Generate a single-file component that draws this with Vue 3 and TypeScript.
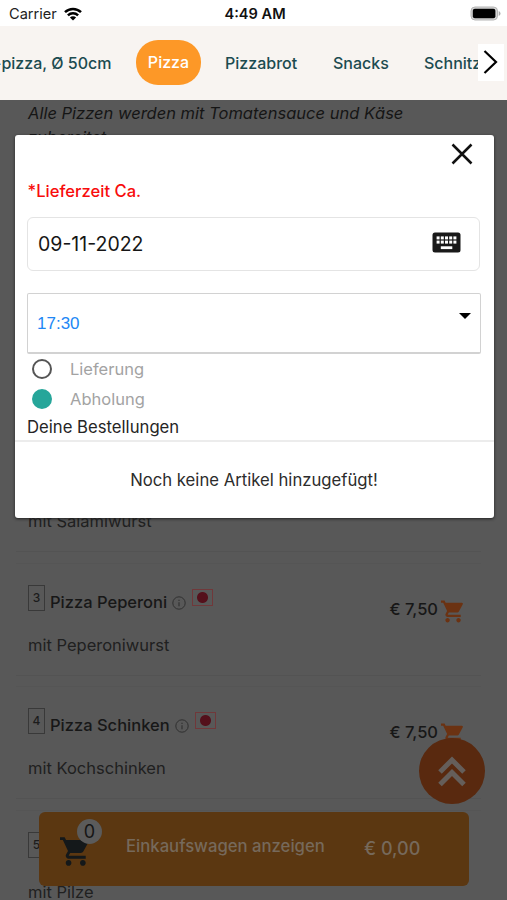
<script setup lang="ts">
interface Dish {
  no: number
  name: string
  text: string
  price: string
}

const categories: string[] = ['Pizzabrot', 'Snacks', 'Schnitzel']

const dishes: Dish[] = [
  { no: 2, name: 'Pizza Salami', text: 'mit Salamiwurst', price: '€ 7,50' },
  { no: 3, name: 'Pizza Peperoni', text: 'mit Peperoniwurst', price: '€ 7,50' },
  { no: 4, name: 'Pizza Schinken', text: 'mit Kochschinken', price: '€ 7,50' },
  { no: 5, name: 'Pizza Pilze', text: 'mit Pilze', price: '€ 7,50' },
]

const cartPath =
  'M7 18c-1.1 0-1.99.9-1.99 2S5.9 22 7 22s2-.9 2-2-.9-2-2-2zM1 2v2h2l3.6 7.59-1.35 2.45c-.16.28-.25.61-.25.96 0 1.1.9 2 2 2h12v-2H7.42c-.14 0-.25-.11-.25-.25l.03-.12.9-1.63h7.45c.75 0 1.41-.41 1.75-1.03l3.58-6.49A1.003 1.003 0 0 0 20 4H5.21l-.94-2H1zm16 16c-1.1 0-1.99.9-1.99 2s.89 2 1.99 2 2-.9 2-2-.9-2-2-2z'
</script>

<template>
  <main class="screen">
    <header class="status">
      <div class="carrier">
        <span>Carrier</span>
        <svg class="wifi" viewBox="0 0 18 14">
          <g fill="none" stroke="#000" stroke-width="2.5">
            <path d="M1 5.2A11.6 11.6 0 0 1 17 5.2" />
            <path d="M3.9 8.3A7.4 7.4 0 0 1 14.1 8.3" />
          </g>
          <path d="M9 13.6L5.9 10.5A4.4 4.4 0 0 1 12.1 10.5Z" />
        </svg>
      </div>
      <span class="clock">4:49 AM</span>
      <svg class="battery" viewBox="0 0 31 15">
        <rect x="1" y="1" width="26.5" height="13" rx="4" fill="#d4d4d4" stroke="#b5b5b5" />
        <rect x="2.8" y="2.8" width="22.6" height="9.4" rx="2" />
        <path d="M28.7 5v5q1.8-.7 1.8-2.5T28.7 5z" fill="#aaa" />
      </svg>
    </header>

    <nav class="tabs">
      <span class="tab first">-pizza, Ø 50cm</span>
      <span class="tab active">Pizza</span>
      <span v-for="(c, i) in categories" :key="c" class="tab" :class="'cat-' + i">{{ c }}</span>
      <button class="next" aria-label="Weiter">
        <svg viewBox="0 0 26 37">
          <path d="M6.5 7L18 18L6.5 29" fill="none" stroke="#000" stroke-width="2.2" />
        </svg>
      </button>
    </nav>

    <section class="menu">
      <p class="intro">Alle Pizzen werden mit Tomatensauce und Käse<br />zubereitet.</p>
      <article v-for="d in dishes" :key="d.no" class="dish">
        <div class="head">
          <span class="no">{{ d.no }}</span>
          <span class="name">{{ d.name }}</span>
          <svg class="info" viewBox="0 0 14 14">
            <circle cx="7" cy="7" r="6.2" fill="none" stroke="#303030" stroke-width="1" />
            <path d="M7 6.2v4M7 3.8v1.2" stroke="#303030" stroke-width="1.1" />
          </svg>
          <span class="flag"></span>
          <span class="price">{{ d.price }}</span>
          <svg class="cart" viewBox="1 2 21 20"><path :d="cartPath" fill="#6b3212" /></svg>
        </div>
        <p class="text">{{ d.text }}</p>
      </article>
    </section>

    <div class="basket">
      <div class="basket-icon">
        <svg viewBox="1 2 21 20"><path :d="cartPath" fill="#14181a" /></svg>
        <span class="count">0</span>
      </div>
      <span class="show">Einkaufswagen anzeigen</span>
      <span class="sum">€ 0,00</span>
    </div>

    <button class="top" aria-label="Nach oben">
      <svg viewBox="0 0 66 66">
        <g fill="none" stroke="#655e5a" stroke-width="5">
          <path d="M21 34L33 22L45 34" />
          <path d="M21 46.5L33 34.5L45 46.5" />
        </g>
      </svg>
    </button>

    <section class="modal">
      <button class="close" aria-label="Schließen">
        <svg viewBox="0 0 22 22">
          <path d="M1.5 1.5L20.5 20.5M20.5 1.5L1.5 20.5" stroke="#111" stroke-width="2.5" />
        </svg>
      </button>
      <p class="label">*Lieferzeit Ca.</p>
      <div class="date">
        <span>09-11-2022</span>
        <svg viewBox="0 0 29 21">
          <rect x=".5" y=".5" width="28" height="20" rx="2.5" fill="#191919" />
          <g fill="#fff">
            <template v-for="r in 2" :key="r">
              <rect v-for="c in 5" :key="c" :x="c * 4.2 + 0.4" :y="r * 4.2 + 0.2" width="3" height="3" />
            </template>
            <rect x="8.8" y="14.3" width="11.5" height="2.8" />
          </g>
        </svg>
      </div>
      <div class="time">
        <span>17:30</span>
        <i class="caret"></i>
      </div>
      <div class="radio"><i class="dot"></i><span>Lieferung</span></div>
      <div class="radio"><i class="dot on"></i><span>Abholung</span></div>
      <h2 class="orders">Deine Bestellungen</h2>
      <p class="empty">Noch keine Artikel hinzugefügt!</p>
    </section>
  </main>
</template>

<style>
body {
  margin: 0;
  overflow: hidden;
}
</style>

<style scoped>
* {
  box-sizing: border-box;
}
p,
h2 {
  margin: 0;
}
button {
  border: 0;
  padding: 0;
}
svg {
  display: block;
  flex: none;
}
.screen {
  position: relative;
  width: 507px;
  height: 900px;
  overflow: hidden;
  background: #585858;
  font-family: Inter, 'Liberation Sans', sans-serif;
  font-size: 16.5px;
  white-space: nowrap;
}
.status {
  display: grid;
  grid-template-columns: 1fr auto 1fr;
  align-items: center;
  height: 26px;
  padding: 1px 6px 0 9px;
  background: #fff;
  font-size: 14.6px;
}
.carrier {
  display: flex;
  align-items: center;
  gap: 7px;
  color: #222;
}
.wifi {
  width: 18px;
  height: 14px;
}
.clock {
  font-weight: 600;
  color: #111;
}
.battery {
  width: 31px;
  height: 15px;
  justify-self: end;
}
.tabs {
  position: relative;
  display: flex;
  align-items: center;
  height: 74px;
  padding-bottom: 1px;
  overflow: hidden;
  background: #f8f4f1;
  color: #1c4b50;
  font-size: 16px;
  font-weight: 500;
}
.tab {
  flex: none;
}
.first {
  width: 136px;
  text-indent: -6px;
}
.active {
  width: 65px;
  height: 45px;
  margin-right: 24px;
  border-radius: 22px;
  background: #fd9827;
  color: #fff;
  line-height: 45px;
  text-align: center;
}
.cat-0 {
  width: 108px;
}
.cat-1 {
  width: 91px;
}
.next {
  position: absolute;
  top: 18px;
  right: 3px;
  width: 26px;
  height: 37px;
  background: #fff;
}
.menu {
  padding: 1px 26px 0 28px;
}
.intro {
  height: 338px;
  color: #151515;
  font-style: italic;
  line-height: 24px;
}
.dish {
  height: 123.7px;
  margin-left: -12px;
  border-top: 1px solid #555;
}
.dish::after {
  content: '';
  display: block;
  margin-top: 19px;
  border-top: 1px solid #535353;
}
.head {
  display: flex;
  height: 60px;
  padding: 21px 0 0 12px;
}
.no {
  flex: none;
  width: 17px;
  height: 26px;
  border: 1px solid #393939;
  color: #1c1c1c;
  font-size: 12px;
  font-weight: 500;
  line-height: 24px;
  text-align: center;
}
.name {
  margin: 7px 0 0 5px;
  color: #171717;
  font-weight: 500;
  line-height: 20px;
}
.info {
  width: 14px;
  height: 14px;
  margin: 11px 6px 0 5px;
}
.flag {
  width: 21px;
  height: 17px;
  margin-top: 4px;
  border: 1px solid #70383a;
  background: radial-gradient(circle, #54101b 5px, transparent 6px);
}
.price {
  margin: 14px 3px 0 auto;
  color: #171717;
  font-weight: 500;
  line-height: 20px;
}
.cart {
  width: 23px;
  height: 23px;
  margin: 15px 17px 0 0;
}
.text {
  margin-top: 10px;
  padding-left: 12px;
  color: #202020;
  line-height: 22px;
}
.basket {
  position: absolute;
  left: 39px;
  top: 812px;
  display: flex;
  align-items: center;
  width: 430px;
  height: 74px;
  border-radius: 6px;
  background: #5b3711;
  color: #76695b;
  font-weight: 500;
}
.basket-icon {
  position: relative;
  margin-left: 21px;
  width: 66px;
  height: 74px;
}
.basket-icon svg {
  width: 30px;
  height: 31px;
  margin-top: 24px;
}
.count {
  position: absolute;
  left: 17px;
  top: 7px;
  width: 25px;
  height: 25px;
  border-radius: 50%;
  background: #5b5b5b;
  color: #151515;
  font-size: 18px;
  font-weight: 400;
  line-height: 25px;
  text-align: center;
}
.show {
  width: 238px;
  margin-top: -7px;
  font-size: 16.7px;
}
.sum {
  margin-top: -2px;
  font-size: 18px;
}
.top {
  position: absolute;
  left: 419px;
  top: 738px;
  width: 66px;
  height: 66px;
  border-radius: 50%;
  background: #59290f;
}
.modal {
  position: absolute;
  left: 14.5px;
  top: 135px;
  display: flex;
  flex-direction: column;
  width: 479px;
  height: 383px;
  border-radius: 3px;
  background: #fff;
  box-shadow: 0 1px 3px #222;
}
.close {
  width: 22px;
  height: 22px;
  margin: 8px 0 0 436px;
  background: none;
}
.label {
  margin: 14px 0 0 13px;
  color: #f80c0c;
  font-size: 16.6px;
  font-weight: 500;
  line-height: 24px;
}
.date {
  display: flex;
  align-items: center;
  justify-content: space-between;
  width: 453px;
  height: 54px;
  margin: 14px 0 0 12.5px;
  padding: 0 18px 0 10px;
  border: 1px solid #e4e4e4;
  border-radius: 6px;
  color: #161616;
  font-size: 19.5px;
}
.date svg {
  width: 29px;
  height: 21px;
  margin-top: -3px;
}
.time {
  display: flex;
  align-items: center;
  justify-content: space-between;
  width: 454px;
  height: 61px;
  margin: 22px 0 0 12.5px;
  padding: 2px 9px 0;
  border: 1px solid #d2d2d2;
  border-bottom-width: 2px;
  border-radius: 2px;
  color: #2187f5;
  font-family: 'Liberation Sans', sans-serif;
  font-size: 17px;
}
.caret {
  margin-top: -17px;
  border: 6px solid transparent;
  border-top-color: #000;
  border-bottom: 0;
}
.radio {
  display: flex;
  align-items: center;
  height: 30.5px;
  margin-left: 17.5px;
  gap: 18px;
  color: #a3a3a3;
}
.radio span {
  margin-top: -1px;
}
.dot {
  width: 20px;
  height: 20px;
  margin-top: -1px;
  border: 2px solid #555;
  border-radius: 50%;
}
.on {
  border-color: #26a69a;
  background: #26a69a;
}
.orders {
  height: 27px;
  padding-left: 12.5px;
  border-bottom: 2px solid #ececec;
  color: #252525;
  font-size: 16.7px;
  font-weight: 400;
  line-height: 25px;
}
.empty {
  margin-top: 26px;
  color: #2c2c2c;
  font-size: 16.7px;
  line-height: 24px;
  text-align: center;
}
</style>
